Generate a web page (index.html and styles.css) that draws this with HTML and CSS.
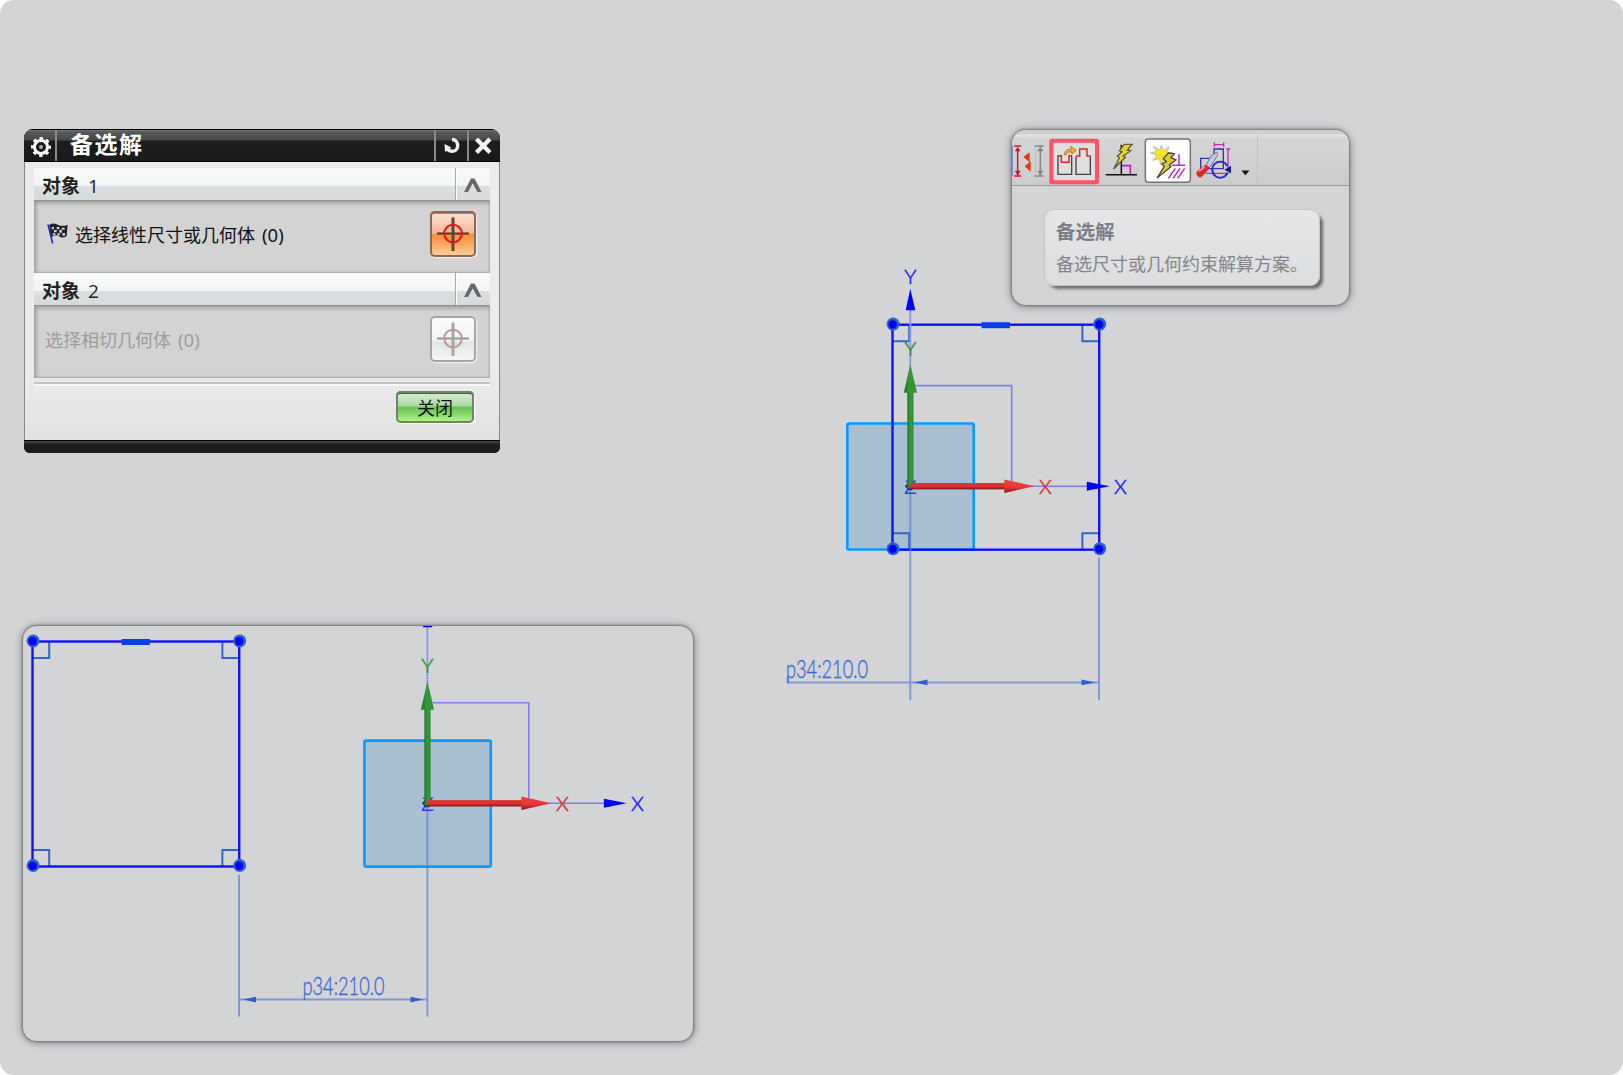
FILE: index.html
```html
<!DOCTYPE html>
<html lang="zh-CN">
<head>
<meta charset="utf-8">
<title>备选解</title>
<link rel="stylesheet" href="styles.css">
</head>
<body>
<svg class="defs" width="0" height="0">
  <defs>
    <linearGradient id="green" x1="0" x2="1" y1="0" y2="0"><stop offset="0" stop-color="#1f7226"/><stop offset=".45" stop-color="#359a38"/><stop offset="1" stop-color="#2f8d33"/></linearGradient>
    <linearGradient id="red" x1="0" x2="0" y1="0" y2="1"><stop offset="0" stop-color="#e03434"/><stop offset=".55" stop-color="#d83030"/><stop offset="1" stop-color="#7d1a1c"/></linearGradient>
    <linearGradient id="redhead" x1="0" x2="0" y1="0" y2="1"><stop offset="0" stop-color="#f03e3e"/><stop offset=".55" stop-color="#ea3838"/><stop offset="1" stop-color="#7d1a1c"/></linearGradient>
    <g id="plane"><rect x="-63" y="-62.7" width="126.4" height="126" rx="1.5" fill="#a8bfd0" stroke="#0a99ff" stroke-width="2.6"/></g>
    <g id="axes">
      <path d="M0-178V0" stroke="#9493ea" stroke-width="1.8"/>
      <path d="M5-100.6H101.4V-5M120 0H180" fill="none" stroke="#7f7ef0" stroke-width="1.6"/>
      <path d="M-4.6-176L0-197.500L5-176z" fill="#00f"/>
      <path d="M176.500-4.500L199.500 0L176.500 4.500z" fill="#00f"/>
      <path d="M-5.500 7H6M-4.500 6L4.500-5H-4.500" fill="none" stroke="#3038e8" stroke-width="1.600"/>
      <path d="M-5.500 0L-1-5H2V4H-2z" fill="#123c80"/>
      <rect x="-3" y="-96" width="6.200" height="98" fill="url(#green)"/>
      <path d="M-6.500-93.500L0-122L6.700-93.500z" fill="url(#green)"/>
      <rect x="0" y="-3.200" width="96" height="6.400" fill="url(#red)"/>
      <path d="M94-6.800L124 0L94 6.800z" fill="url(#redhead)"/>
      <text class="axis axis-y" x="0" y="-130">Y</text>
      <text class="axis axis-x" x="135" y="8">X</text>
      <text class="axis axis-b" x="210" y="8">X</text>
    </g>
    <g id="sketch">
      <g fill="none" stroke="#2e66cf" stroke-width="2"><path d="M0 16.500H16.800V0M206.500 16.500H190V0M0 208.500H16.800V225M206.500 208.500H190V225"/></g>
      <rect x=".1" y="0" width="206.700" height="225" fill="none" stroke="#1111fa" stroke-width="2.400"/>
      <rect x="89.200" y="-2.500" width="28.300" height="6" fill="#0c3fe2"/>
      <g fill="#2c62cc"><circle cx=".7" cy="-.6" r="6.500"/><circle cx="207.300" cy="-.6" r="6.500"/><circle cx=".7" cy="224" r="6.500"/><circle cx="207.300" cy="224" r="6.500"/></g>
      <g fill="#00f"><circle cx=".3" cy="-.2" r="4.200"/><circle cx="206.800" cy="-.2" r="4.200"/><circle cx=".3" cy="224.300" r="4.200"/><circle cx="206.800" cy="224.300" r="4.200"/></g>
    </g>
  </defs>
</svg>
<main class="canvas">
  <svg class="drawing" viewBox="0 0 1623 1075">
    <use href="#plane" x="910.300" y="486.200"/>
    <use href="#sketch" x="892.400" y="324.700"/>
    <path class="dim" d="M910.300 490V700M1099 557.500V700M787.500 677V682.400H1099"/>
    <path class="dimhead" d="M914 682.400L927.500 679.500V685.300zM1095 682.400L1081.500 679.500V685.300z"/>
    <text class="dimtext" x="786" y="678" textLength="82" lengthAdjust="spacingAndGlyphs">p34:210.0</text>
    <use href="#axes" x="910.300" y="486.200"/>
    <text class="axis axis-b" x="910.300" y="283.500">Y</text>
  </svg>

  <section class="dialog">
    <header class="titlebar">
      <span class="tb-cell gear"><svg width="22" height="22" viewBox="-11 -11 22 22"><circle r="6.500" fill="none" stroke="#fff" stroke-width="3"/><circle r="8.700" fill="none" stroke="#fff" stroke-width="2.600" stroke-dasharray="3.416 3.416" stroke-dashoffset="1.700"/><circle r="2" fill="#aaa"/></svg></span>
      <h1>备选解</h1>
      <span class="tb-cell"><svg width="22" height="22" viewBox="0 0 22 22"><path d="M11 4.500C18.500 4.500 18.500 16.300 11.500 16.300C8.500 16.300 7 15.500 5.500 13.500" fill="none" stroke="#eee" stroke-width="3.400"/><path d="M3.500 9L10.500 12.500L4 17z" fill="#eee"/></svg></span>
      <span class="tb-cell"><svg width="22" height="22" viewBox="0 0 22 22"><path d="M3.500 4L17 17.500M17 4L3.500 17.500" stroke="#f2f2f2" stroke-width="4.400"/></svg></span>
    </header>
    <div class="content">
      <div class="sec-head"><h2>对象<span>1</span></h2><span class="fold"><svg width="20" height="16" viewBox="0 0 20 16"><path d="M1 15L8 1.500H11.500L18.500 15H14.500L9.700 6.500L5 15z" fill="#686868"/></svg></span></div>
      <div class="sec-body">
        <svg class="flag" width="22" height="22" viewBox="0 0 66 66"><path d="M6 4L20 61" stroke="#2929c9" stroke-width="5"/><path d="M10 6Q19-2 35 5T65 5L62 39Q50 48 39 40T16 43z" fill="#20202c"/><path d="M17 12h7v7h-7zm15 0h8v7h-8zm15 2h9v6h-9zM24 21h8v7h-8zm16 0h8v8h-8zM20 31h8v6h-8zm14 0h7v7h-7zm15-1h8v8h-8z" fill="#ccc"/></svg>
        <span class="label">选择线性尺寸或几何体<span class="num">(0)</span></span>
        <button class="pick active"><svg width="46" height="46" viewBox="0 0 46 46"><path class="cross" d="M7 22.500H39"/><path class="cross cross-v" d="M23 6.500V40"/><circle class="ring" cx="23" cy="22.500" r="8.800"/></svg></button>
      </div>
      <div class="sec-head"><h2>对象<span>2</span></h2><span class="fold"><svg width="20" height="16" viewBox="0 0 20 16"><path d="M1 15L8 1.500H11.500L18.500 15H14.500L9.700 6.500L5 15z" fill="#686868"/></svg></span></div>
      <div class="sec-body disabled">
        <span class="label">选择相切几何体<span class="num">(0)</span></span>
        <button class="pick"><svg width="46" height="46" viewBox="0 0 46 46"><path class="cross" d="M7 22.500H39"/><path class="cross cross-v" d="M23 6.500V40"/><circle class="ring" cx="23" cy="22.500" r="8.800"/></svg></button>
      </div>
      <div class="actions"><button class="close">关闭</button></div>
    </div>
    <footer class="dialog-foot"></footer>
  </section>

  <section class="panel tools">
    <div class="toolbar">
      <svg width="37" height="50" viewBox="36 45 111 150"><path d="M37 78V168" stroke="#7676d8" stroke-width="3"/><path d="M42 78H64M42 168H64M53 84V164" stroke="#d01830" stroke-width="4.500"/><path d="M45 94L53 80L62 94zM45 152L53 167L62 152z" fill="#c81828"/><path d="M70 111L89 97V127zM74 139L92 124V155z" fill="#e23a0c"/><path d="M103 78H131M103 168H131M121 82V164" stroke="#858585" stroke-width="4.500"/><path d="M112 94L121 80L130 94zM112 152L121 167L130 152z" fill="#858585"/><path d="M107 78V168" stroke="#b4b4b4" stroke-width="2"/></svg>
      <svg width="50" height="50" viewBox="147 45 150 150"><rect x="154" y="62" width="137" height="125" rx="2" fill="#dedfe0" stroke="#ff5366" stroke-width="12"/><path d="M174 107V163H215V107" fill="none" stroke="#444" stroke-width="4"/><path d="M173 107H184V127H207V107H216" fill="none" stroke="#e32222" stroke-width="4.500"/><path d="M228 109V163H271V109" fill="none" stroke="#444" stroke-width="4"/><path d="M228 108H239V87H261V108H272" fill="none" stroke="#e32222" stroke-width="4.500"/><path d="M192 104Q195 86 214 88L212 79L229 91L216 102L215 96Q201 94 198 105z" fill="#ffa51e" stroke="#a3641b" stroke-width="2"/></svg>
      <svg width="45" height="50" viewBox="297 45 135 150"><path d="M317 164H411M364 74V164" stroke="#111" stroke-width="4.500"/><path d="M366 137H391V162" fill="none" stroke="#b02ab8" stroke-width="5"/><path d="M373 73H396L382 90L392 92L370 108L376 112L341 147L358 114L352 108L366 96L358 92z" fill="#e9d52a" stroke="#5d5930" stroke-width="4"/></svg>
      <svg width="48" height="50" viewBox="432 45 144 150"><rect x="436" y="57" width="135" height="130" rx="9" fill="#fff" stroke="#747474" stroke-width="4.500"/><path d="M516 136H555M537 103V136M526 145L505 175M540 145L519 175M554 145L533 175" stroke="#b82bc0" stroke-width="4.500"/><path d="M484 76L491 92L507 80L501 96L520 100L502 108L508 127L493 118L481 134L479 116L457 121L471 107L451 98L471 95L460 79L479 89z" fill="#ffe21d" stroke="#a5c5d0" stroke-width="3"/><path d="M505 99L523 101L513 113L528 120L508 135L513 140L471 174L493 139L486 132L499 125L490 116z" fill="#dcca32" stroke="#494636" stroke-width="4"/></svg>
      <svg width="46" height="50" viewBox="576 45 138 150"><path d="M642 74H671M643 67V81M671 67V81M684 87V152M679 87H691M616 160H686" fill="none" stroke="#c42bc5" stroke-width="4"/><path d="M602 146V115H642V87H670V146z" fill="none" stroke="#3333aa" stroke-width="4"/><path d="M682 138A24 24 0 1 0 683 158" fill="none" stroke="#2222dc" stroke-width="5.500"/><path d="M673 149L693 137V160z" fill="#1717a2"/><path d="M618 136L633 108L651 96L653 103L643 122L628 143z" fill="#c3cbe0" stroke="#69779f" stroke-width="3"/><path d="M617 134L630 143L605 171Q596 175 591 166Q586 159 592 152z" fill="#df2530"/><path d="M596 154L614 141" stroke="#ff9aa0" stroke-width="5"/></svg>
      <svg class="more" width="20" height="50" viewBox="714 45 60 150"><path d="M725 153H750L737.500 168z" fill="#111"/></svg>
    </div>
    <div class="tooltip"><strong>备选解</strong><p>备选尺寸或几何约束解算方案。</p></div>
  </section>

  <section class="panel preview">
    <svg width="670" height="415" viewBox="23 626 670 415">
      <use href="#plane" x="427.400" y="803.300"/>
      <use href="#sketch" x="32.400" y="641.500"/>
      <path class="dim" d="M427.400 806V1016.500M239 875V1016.500M239 999.600H427"/>
      <path class="dimhead" d="M243 999.600L256 996.700V1002.500zM423 999.600L410.500 996.700V1002.500z"/>
      <text class="dimtext" x="302.500" y="995" textLength="82" lengthAdjust="spacingAndGlyphs">p34:210.0</text>
      <use href="#axes" x="427.400" y="803.300"/>
    </svg>
  </section>
</main>
</body>
</html>
```
FILE: styles.css
```css
* { box-sizing: border-box; }
body { margin: 0; background: #fff; font-family: "Noto Sans CJK SC", sans-serif; }
h1, h2, p { margin: 0; }
svg { display: block; flex: none; }
button { padding: 0; border: 0; font: inherit; }
.defs { position: absolute; }

.canvas {
  position: relative;
  width: 1623px;
  height: 1075px;
  overflow: hidden;
  border-radius: 14px;
  background: #d3d4d6;
}
.drawing { width: 1623px; height: 1075px; }

.axis { font: 300 20.500px Lato, "Liberation Sans", sans-serif; text-anchor: middle; }
.axis-y { fill: #2d9638; stroke: #2d9638; stroke-width: .5; }
.axis-x { fill: #d63434; stroke: #d63434; stroke-width: .5; }
.axis-b { fill: #2020f5; stroke: #2020f5; stroke-width: .5; }
.dim { fill: none; stroke: #5a78d4; stroke-opacity: .65; stroke-width: 2; }
.dimhead { fill: #2c5fd0; }
.dimtext { font: 300 25px Lato, "Liberation Sans", sans-serif; fill: #3c68d0; stroke: #3c68d0; stroke-width: .35; }

/* Dialog window */
.dialog {
  position: absolute;
  left: 24px;
  top: 129px;
  width: 476px;
  height: 324px;
  display: flex;
  flex-direction: column;
  border-radius: 9px 9px 6px 6px;
  overflow: hidden;
  background: #111;
}
.titlebar {
  display: flex;
  height: 33px;
  border-top: 1px solid #000;
  border-bottom: 1px solid #000;
  background: linear-gradient(#77787a 0, #58595b 2px, #47484a 10px, #1d1d1d 11px, #1a1a1a 100%);
}
.tb-cell { display: flex; align-items: center; justify-content: center; width: 33px; border-left: 2px solid #8b8b8b; padding-top: 1px; }
.tb-cell:last-child { padding-right: 2px; }
.tb-cell.gear { border-left: 0; border-right: 2px solid #8b8b8b; padding: 2px 0 0 2px; }
.titlebar h1 {
  flex: 1;
  padding-left: 13px;
  color: #fff;
  font-size: 23px;
  font-weight: 700;
  letter-spacing: 1.500px;
  line-height: 27px;
}
.content {
  flex: 1;
  padding: 6px 9px 0 9px;
  border: solid #85878a;
  border-width: 0 1px;
  background: linear-gradient(#ebebeb 0, #ebebeb 75%, #e2e2e2 100%);
}
.dialog-foot { height: 13px; border-top: 1px solid #000; background: linear-gradient(#4c4c4c, #1c1c1c 4px); }
.sec-head {
  display: flex;
  justify-content: space-between;
  height: 33px;
  border-bottom: 1px solid #929292;
  background: linear-gradient(#f9f9f9 0, #f2f4f4 55%, #dcdfe1 56%, #d7dadb 100%);
}
.sec-head h2 { padding-left: 8px; color: #222; font-size: 19px; font-weight: 700; line-height: 34px; }
.sec-head h2 span { font-family: "Open Sans", "Noto Sans", sans-serif; font-size: 19px; font-weight: 400; margin-left: 8px; }
.fold { display: flex; align-items: center; justify-content: center; width: 35px; padding-top: 1px; border-left: 1px solid #aaa; box-shadow: inset 1px 0 #fff; }
.sec-body {
  display: flex;
  align-items: center;
  height: 72px;
  padding: 0 14px 6px 12px;
  background: #d3d3d3;
  box-shadow: inset 2px 2px 4px #999, inset -1px -1px 2px #aaa;
}
.flag { margin: 0 7px 0 0; }
.label { flex: 1; font-size: 18px; color: #111; white-space: nowrap; }
.label .num { margin-left: 7px; font-family: "Noto Sans", sans-serif; font-size: 18.500px; }
.disabled { padding-left: 11px; }
.disabled .label { color: #9d9d9d; }
.pick {
  width: 46px;
  height: 46px;
  border-radius: 5px;
  background: linear-gradient(#fdfdfd, #f0f1f1 55%, #e2e5e5 56%, #f8f8f8);
  box-shadow: inset 0 0 0 2px #a5a5a5, 1px 1px 1px #f5f5f5;
}
.cross { stroke: #929494; stroke-width: 2; fill: none; }
.cross-v { stroke: #a5a7a7; stroke-width: 3; }
.ring { stroke: #c19898; stroke-width: 2; fill: none; }
.active .cross { stroke: #4b382c; }
.active .cross-v { stroke: #5d4635; }
.active .ring { stroke: #e61515; }
.pick.active { background: linear-gradient(#fce6dc, #f7b48e 50%, #fb8b3a 51%, #ffd49b); box-shadow: inset 0 0 0 2px #8c6b56, inset 0 3px 0 #ed7420, 1px 1px 1px #f5f5f5; }
.actions {
  display: flex;
  justify-content: flex-end;
  margin-top: 4px;
  padding: 7px 16px 0 0;
  border-top: 2px solid #c6c6c6;
  box-shadow: inset 0 2px #f8f8f8;
}
.close {
  width: 78px;
  height: 32px;
  border-radius: 5px;
  background: linear-gradient(#e0f1df, #acd6a4 47%, #65bf53 50%, #aff487 94%);
  box-shadow: inset 0 0 0 2px #6d846a, inset 0 4px 0 -1px #217a22, 1px 1px 1px #fff;
  color: #111;
  font-size: 18px;
  line-height: 32px;
}

/* Floating panels */
.panel { position: absolute; overflow: hidden; border-radius: 14px; background: #d3d4d6; box-shadow: 0 0 2px 1px #777, 0 1px 9px 1px #85858a; }
.preview { left: 23px; top: 626px; width: 670px; height: 415px; }
.tools { left: 1012px; top: 130px; width: 337px; height: 175px; }
.toolbar { display: flex; height: 56px; padding-top: 5px; border-bottom: 1px solid #96979a; background: linear-gradient(#cfcfcf 0, #cfcfcf 4px, #e6e6e6 5px, #d5d5d5 8px, #cccccd 100%); }
.more { border-right: 1px solid #c0c0c0; }
.tooltip {
  width: 276px;
  height: 77px;
  margin: 23px 0 0 32px;
  padding: 7px 11px;
  border: 1px solid #c3c4c6;
  border-radius: 10px;
  background: linear-gradient(#e5e6e8, #dcdddf);
  box-shadow: 4px 4px 3px -1px #6d6e70;
  white-space: nowrap;
}
.tooltip strong { display: block; color: #7d7d8a; font-size: 19.500px; line-height: 28px; }
.tooltip p { color: #858587; font-size: 18px; line-height: 36px; }
```
